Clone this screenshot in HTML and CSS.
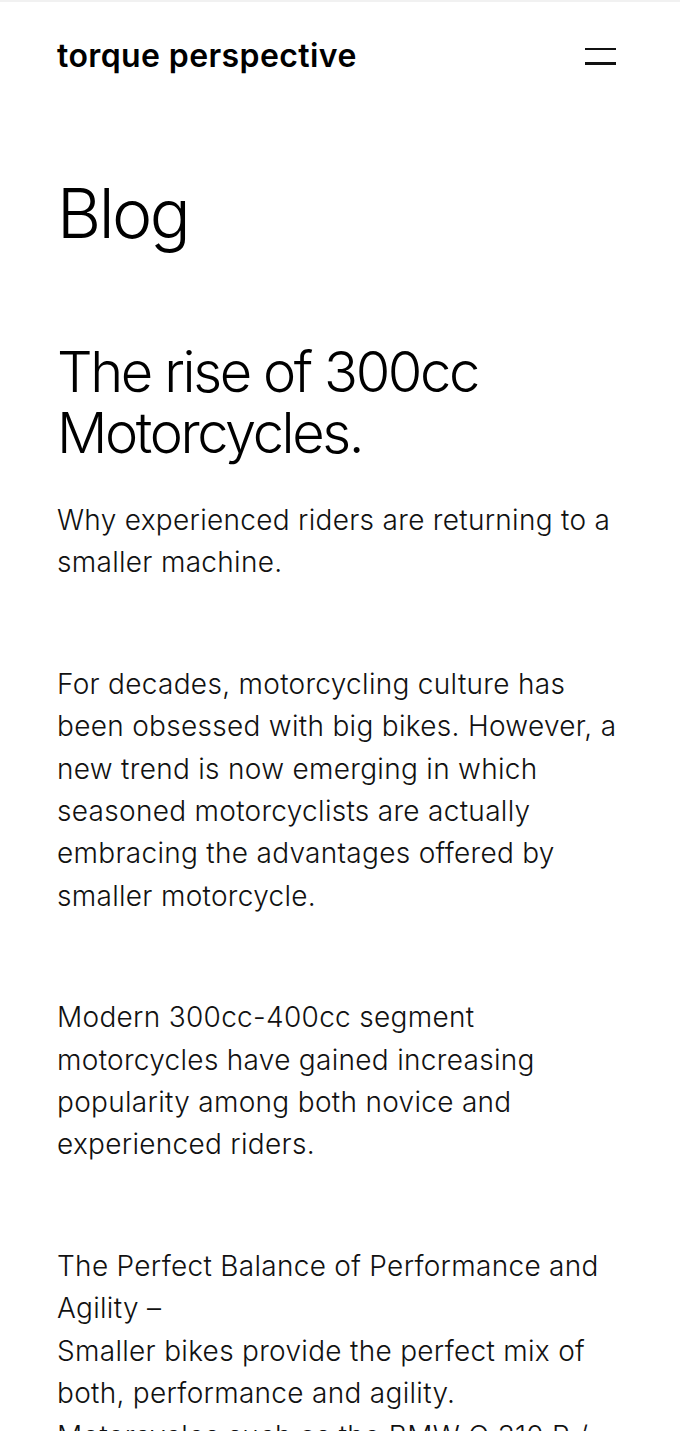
FILE: index.html
```html
<!DOCTYPE html>
<html lang="en">
<head>
<meta charset="utf-8">
<title>Blog – torque perspective</title>
<link rel="stylesheet" href="styles.css">
</head>
<body>
<div class="page">
  <header class="site-header">
    <a class="brand" href="#">torque perspective</a>
    <button class="menu-toggle" aria-label="Menu">
      <span class="bar"></span>
      <span class="bar"></span>
    </button>
  </header>
  <main class="content">
    <h1 class="page-title">Blog</h1>
    <article class="post">
      <h2 class="post-title">The rise of 300cc Motorcycles.</h2>
      <p class="text">Why experienced riders are returning to a smaller machine.</p>
      <p class="text">For decades, motorcycling culture has been obsessed with big bikes. However, a new trend is now emerging in which seasoned motorcyclists are actually embracing the advantages offered by smaller motorcycle.</p>
      <p class="text">Modern 300cc-400cc segment motorcycles have gained increasing popularity among both novice and experienced riders.</p>
      <p class="text">The Perfect Balance of Performance and Agility –<br>Smaller bikes provide the perfect mix of both, performance and agility.<br>Motorcycles such as the BMW G 310 R / KTM 390 Duke and Royal Enfield Himalayan offer enough power for spirited riding.</p>
    </article>
  </main>
</div>
</body>
</html>
```
FILE: styles.css
```css
html, body {
  margin: 0;
  padding: 0;
  background: #ffffff;
}

body {
  font-family: Inter, "Noto Sans", sans-serif;
  color: #111111;
  border-top: 2px solid #f1f1f1;
}

.page {
  padding: 0 57px;
}

.site-header {
  display: flex;
  justify-content: space-between;
  align-items: center;
  padding-top: 34px;
  height: 40px;
}

.brand {
  font-size: 32px;
  line-height: 40px;
  font-weight: 600;
  letter-spacing: 0.4px;
  color: #000;
  text-decoration: none;
}

.menu-toggle {
  display: flex;
  flex-direction: column;
  gap: 12px;
  padding: 0;
  margin-right: 7px;
  border: 0;
  background: none;
  width: 31px;
}

.bar {
  display: block;
  width: 31px;
  height: 2.5px;
  background: #111;
}

.page-title {
  margin: 100px 0 0;
  font-size: 68px;
  line-height: 75px;
  font-weight: 300;
  letter-spacing: -2.5px;
  color: #000;
}

.post-title {
  margin: 91px 0 0;
  font-size: 56px;
  line-height: 61px;
  font-weight: 300;
  letter-spacing: -2.4px;
  color: #000;
}

.text {
  margin: 79px 0 0;
  font-size: 28px;
  line-height: 42.4px;
  font-weight: 300;
  letter-spacing: 0.3px;
  color: #111;
}

.post-title + .text {
  margin-top: 35px;
}
```
